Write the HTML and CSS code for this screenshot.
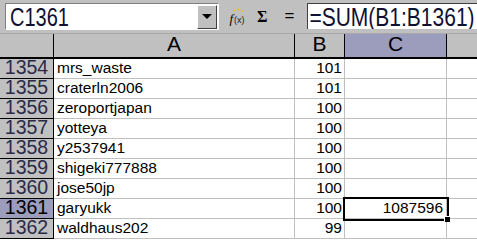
FILE: index.html
```html
<!DOCTYPE html>
<html>
<head>
<meta charset="utf-8">
<link rel="stylesheet" href="styles.css">
</head>
<body>
<div class="toolbar">
  <div class="namebox">
    <span class="namebox-text">C1361</span>
    <div class="dropbtn"><span class="tri"></span></div>
  </div>
  <div class="fx">
    <svg width="18" height="18" viewBox="0 0 18 18">
      <circle cx="5" cy="2.5" r="1" fill="#f0c000"/>
      <circle cx="9" cy="1.5" r="1" fill="#f0c000"/>
      <circle cx="13" cy="3" r="1" fill="#f0c000"/>
      <text x="0.5" y="15" font-family="Liberation Serif, serif" font-style="italic" font-size="13" fill="#000">f</text>
      <text x="5" y="15" font-family="Liberation Sans, sans-serif" font-size="9" fill="#222">(x)</text>
    </svg>
  </div>
  <div class="sigma">Σ</div>
  <div class="equals">=</div>
  <div class="formula"><span class="formula-text">=SUM(B1:B1361)</span></div>
</div>
<div class="sheet">
  <div class="hd corner"></div>
  <div class="hd colhd">A</div>
  <div class="hd colhd">B</div>
  <div class="hd colhd sel">C</div>
  <div class="hd colhd last"></div>

  <div class="rh">1354</div><div class="c a">mrs_waste</div><div class="c b">101</div><div class="c"></div><div class="c d"></div>
  <div class="rh">1355</div><div class="c a">craterln2006</div><div class="c b">101</div><div class="c"></div><div class="c d"></div>
  <div class="rh">1356</div><div class="c a">zeroportjapan</div><div class="c b">100</div><div class="c"></div><div class="c d"></div>
  <div class="rh">1357</div><div class="c a">yotteya</div><div class="c b">100</div><div class="c"></div><div class="c d"></div>
  <div class="rh">1358</div><div class="c a">y2537941</div><div class="c b">100</div><div class="c"></div><div class="c d"></div>
  <div class="rh">1359</div><div class="c a">shigeki777888</div><div class="c b">100</div><div class="c"></div><div class="c d"></div>
  <div class="rh">1360</div><div class="c a">jose50jp</div><div class="c b">100</div><div class="c"></div><div class="c d"></div>
  <div class="rh sel">1361</div><div class="c a">garyukk</div><div class="c b">100</div><div class="c b active">1087596</div><div class="c d"></div>
  <div class="rh">1362</div><div class="c a">waldhaus202</div><div class="c b">99</div><div class="c"></div><div class="c d"></div>
</div>
</body>
</html>
```
FILE: styles.css
```css
html, body {
  margin: 0;
  padding: 0;
  background: #fff;
  width: 477px;
  height: 241px;
  overflow: hidden;
  font-family: "Liberation Sans", Arial, sans-serif;
}
.toolbar {
  height: 34px;
  background: #c0c0c0;
  border-bottom: 1px solid #a8a8a8;
  box-sizing: border-box;
  display: flex;
  align-items: flex-start;
  padding: 3px 0 0 5px;
}
.namebox {
  width: 214px;
  height: 27px;
  box-sizing: border-box;
  background: #fff;
  border-top: 1px solid #808080;
  border-left: 1px solid #808080;
  border-right: 1px solid #fff;
  border-bottom: 1px solid #fff;
  display: flex;
  align-items: center;
}
.namebox-text {
  flex: 1;
  font-size: 20px;
  padding-left: 4px;
  color: #101030;
  display: inline-block;
  transform: scaleY(1.25);
  transform-origin: left center;
  line-height: 1;
}
.dropbtn {
  width: 20px;
  height: 24px;
  box-sizing: border-box;
  background: #c0c0c0;
  border-top: 1px solid #fff;
  border-left: 1px solid #fff;
  border-right: 1px solid #404040;
  border-bottom: 1px solid #404040;
  margin-right: 1px;
  display: flex;
  align-items: center;
  justify-content: center;
}
.tri {
  width: 0;
  height: 0;
  border-left: 5px solid transparent;
  border-right: 5px solid transparent;
  border-top: 5px solid #000;
}
.fx {
  margin-left: 10px;
  margin-top: 5px;
  width: 18px;
  height: 18px;
}
.sigma {
  margin-left: 10px;
  margin-top: 5px;
  font-family: "Liberation Serif", serif;
  font-weight: bold;
  font-size: 16px;
  line-height: 18px;
}
.equals {
  margin-left: 17px;
  margin-top: 4px;
  font-size: 17px;
  line-height: 18px;
}
.formula {
  margin-left: 13px;
  flex: 1;
  height: 26px;
  background: #fff;
  border-top: 1px solid #404040;
  border-left: 1px solid #404040;
  box-sizing: border-box;
  display: flex;
  align-items: center;
  overflow: hidden;
  white-space: nowrap;
}
.formula-text {
  font-size: 21px;
  color: #101030;
  padding-left: 1px;
  display: inline-block;
  transform: scaleY(1.2);
  transform-origin: left center;
  line-height: 1;
}
.sheet {
  display: grid;
  grid-template-columns: 54px 241px 50px 102px 1fr;
  grid-template-rows: 25px repeat(9, 20px);
}
.hd {
  background: #c0c0c0;
  box-sizing: border-box;
  border-right: 1px solid #000;
  border-bottom: 2px solid #000;
  font-size: 21px;
  display: flex;
  align-items: flex-end;
  justify-content: center;
  padding-bottom: 3px;
  line-height: 1;
  color: #000;
}
.hd.sel {
  background: #9c9cbc;
}
.hd.last {
  border-right: none;
}
.rh {
  background: #c0c0c0;
  box-sizing: border-box;
  border-right: 1px solid #000;
  border-bottom: 1px solid #000;
  font-size: 19.5px;
  line-height: 1;
  display: flex;
  align-items: flex-end;
  justify-content: center;
  padding-bottom: 1px;
  color: #2a2a48;
}
.rh.sel {
  background: #9c9cbc;
  color: #000;
}
.c {
  box-sizing: border-box;
  border-right: 1px solid #c0c0c0;
  border-bottom: 1px solid #c0c0c0;
  font-size: 15.5px;
  line-height: 1;
  display: flex;
  align-items: flex-end;
  padding: 0 2px 3px 3px;
  color: #000;
  white-space: nowrap;
}
.c.b {
  justify-content: flex-end;
}
.c.d {
  border-right: none;
}
.c.active {
  position: relative;
  outline: 2px solid #000;
  outline-offset: 0px;
  padding-right: 3px;
  z-index: 1;
}
.c.active::after {
  content: "";
  position: absolute;
  right: -4px;
  bottom: -4px;
  width: 5px;
  height: 5px;
  background: #000;
  border: 1px solid #fff;
  border-right: none;
  border-bottom: none;
}
```
